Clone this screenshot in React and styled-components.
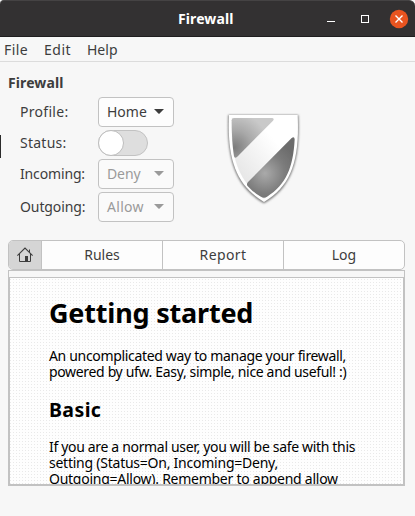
import React from "react";
import styled, { createGlobalStyle } from "styled-components";

const Global = createGlobalStyle`
  * { box-sizing: border-box; }
  body { margin: 0; background: #f7f7f7; overflow: hidden; }
  h1, h2, p { margin: 0; }
`;

const Window = styled.div`
  width: 415px;
  height: 516px;
  background: #f7f7f7;
  color: #3d3d3d;
  font-family: "Noto Sans", "Open Sans", sans-serif;
  font-size: 14px;
  overflow: hidden;
`;

const Text = styled.span`
  display: block;
  white-space: nowrap;
  letter-spacing: ${(p) => p.$track || 0}px;
`;

const TitleBar = styled.header`
  display: grid;
  grid-template-columns: 178px 1fr auto;
  align-items: center;
  height: 37px;
  padding-right: 6px;
  background: #333132;
  border-top: 1px solid #454344;
  border-bottom: 1px solid #1f1e1f;
  border-radius: 4px 6px 0 0;
  color: #fff;
  font-weight: 700;
`;

const WindowButtons = styled.svg`
  grid-column: 3;
  display: block;
`;

const MenuBar = styled.nav`
  display: grid;
  grid-template-columns: 40px 43px auto;
  align-items: center;
  height: 25px;
  padding-left: 4px;
  border-bottom: 1px solid #dcdcdc;
`;

const Summary = styled.section`
  display: grid;
  grid-template-columns: 215px auto;
  height: 178px;
`;

const Heading = styled.div`
  padding: 11px 0 0 8px;
  height: 35px;
  line-height: 20px;
  font-weight: 700;
`;

const Row = styled.div`
  display: grid;
  grid-template-columns: 78px auto;
  justify-content: start;
  align-items: center;
  padding-left: 20px;
  height: ${(p) => p.$h}px;
  margin-bottom: 3px;
`;

const RowLabel = styled(Text)`
  padding-bottom: 2px;
`;

const Combo = styled.div`
  display: flex;
  align-items: center;
  justify-content: space-between;
  width: 76px;
  height: 30px;
  padding: 0 9px 1px 8px;
  border: 1px solid #c2c2c2;
  border-radius: 4px;
  background: ${(p) => (p.$off ? "#fafafa" : "#fdfdfd")};
  color: ${(p) => (p.$off ? "#9a9a9a" : "#3d3d3d")};
`;

const Switch = styled.div`
  width: 50px;
  height: 26px;
  border: 1px solid #c2c2c2;
  border-radius: 13px;
  background: #dedede;
`;

const Knob = styled.div`
  width: 26px;
  height: 26px;
  margin: -1px;
  border: 1px solid #bdbdbd;
  border-radius: 50%;
  background: #fff;
`;

const ShieldArt = styled.svg`
  display: block;
  margin-top: 43px;
`;

const EdgeMark = styled.div`
  position: absolute;
  left: 0;
  top: 135px;
  width: 1px;
  height: 23px;
  background: #2b2b2b;
`;

const TabStrip = styled.div`
  display: grid;
  grid-template-columns: 33px 121px 121px 1fr;
  width: 397px;
  height: 30px;
  margin-left: 8px;
  border: 1px solid #c2c2c2;
  border-radius: 5px;
  background: #fdfdfd;
  overflow: hidden;
`;

const Tab = styled.div`
  display: flex;
  align-items: center;
  justify-content: center;
  padding-bottom: 1px;
  background: ${(p) => (p.$active ? "#d5d5d5" : "transparent")};
  border-right: ${(p) => (p.$last ? 0 : 1)}px solid #c2c2c2;
`;

const Panel = styled.section`
  width: 397px;
  height: 216px;
  margin-left: 8px;
  padding-top: 6px;
  border: 1px solid #c2c2c2;
`;

const Page = styled.article`
  height: 208px;
  padding-left: 39px;
  border: 1px solid #c2c2c2;
  overflow: hidden;
  color: #000;
  background: #fefefe conic-gradient(at 1px 1px, transparent 75%, #e9e9e9 0) 0 1px / 3px 3px;
`;

const Title = styled.h1`
  padding-top: 15px;
  font-size: 27px;
  line-height: 40px;
`;

const Subtitle = styled.h2`
  padding: 17px 0 16px;
  font-size: 19.5px;
  line-height: 26px;
`;

const Paragraph = styled.p`
  padding-top: ${(p) => p.$top || 0}px;
  line-height: 16px;
`;

const Arrow = ({ color }) => (
  <svg width="10" height="5" viewBox="0 0 10 5">
    <path d="M0 0H10L5.6 4.6Q5 5 4.4 4.6Z" fill={color} />
  </svg>
);

const Select = ({ label, track, off }) => (
  <Combo $off={off}>
    <Text $track={track}>{label}</Text>
    <Arrow color={off ? "#9a9a9a" : "#3d3d3d"} />
  </Combo>
);

const HomeIcon = () => (
  <svg width="16" height="16" viewBox="0 0 16 16" fill="none" stroke="#3d3d3d">
    <path d="M0.4 8.6L8 1.1L15.6 8.6" strokeWidth="1.1" />
    <path d="M12.5 5V2.5" />
    <path d="M2.5 7V14.5H13.5V7" />
    <path d="M8 9H11V14H8Z" fill="#3d3d3d" stroke="none" />
  </svg>
);

const Shield = () => (
  <ShieldArt width="95" height="105" viewBox="0 0 285 315">
    <defs>
      <linearGradient id="body" x1="0" y1="1" x2="1" y2="0">
        <stop offset="0.2" stopColor="#e6e6e6" />
        <stop offset="0.7" stopColor="#ffffff" />
      </linearGradient>
      <radialGradient id="upper" gradientUnits="userSpaceOnUse" cx="58" cy="128" r="105">
        <stop offset="0" stopColor="#7b7b7b" />
        <stop offset="0.5" stopColor="#a8a8a8" />
        <stop offset="1" stopColor="#c9c9c9" />
      </radialGradient>
      <radialGradient id="lower" gradientUnits="userSpaceOnUse" cx="150" cy="205" r="100">
        <stop offset="0" stopColor="#aaaaaa" />
        <stop offset="0.6" stopColor="#7c7c7c" />
        <stop offset="1" stopColor="#6c6c6c" />
      </radialGradient>
      <filter id="shadow" x="-10%" y="-10%" width="120%" height="120%">
        <feGaussianBlur stdDeviation="3" />
      </filter>
      <filter id="soft" x="-10%" y="-10%" width="120%" height="120%">
        <feGaussianBlur stdDeviation="1.6" />
      </filter>
    </defs>
    <path d="M40 30H250C256 165 232 246 147 295C62 246 34 165 40 30Z" fill="#777" filter="url(#shadow)" />
    <path d="M42 30H248C254 164 230 242 147 291C64 242 36 164 42 30Z" fill="#fff" />
    <path d="M50 38H240C245 158 223 234 147 281C71 234 45 158 50 38Z" fill="url(#body)" />
    <g filter="url(#soft)">
      <path d="M57 39H172Q179 41 174 47L66 156Q59 161 57 154Q50 110 50 46Q50 39 57 39Z" fill="url(#upper)" />
      <path d="M230 99Q238 93 239 103C235 185 214 240 156 275Q147 281 138 275Q112 260 97 242Q94 237 99 231Z" fill="url(#lower)" />
    </g>
  </ShieldArt>
);

export default function App() {
  return (
    <>
      <Global />
      <Window>
        <TitleBar>
          <span />
          <Text $track={0.1}>Firewall</Text>
          <WindowButtons width="84" height="34" viewBox="0 0 84 34" fill="none">
            <path d="M2 19.5H10" stroke="#fff" />
            <rect x="36.5" y="13.5" width="7" height="7" stroke="#fff" />
            <circle cx="74" cy="17" r="9.2" fill="#e95420" />
            <path d="M70.5 13.5L77.5 20.5M77.5 13.5L70.5 20.5" stroke="#fff" strokeWidth="1.4" />
          </WindowButtons>
        </TitleBar>
        <MenuBar>
          <Text $track={0.4}>File</Text>
          <Text $track={0.5}>Edit</Text>
          <Text>Help</Text>
        </MenuBar>
        <Summary>
          <div>
            <Heading><Text $track={0.1}>Firewall</Text></Heading>
            <Row $h={30}><RowLabel $track={0.3}>Profile:</RowLabel><Select label="Home" /></Row>
            <Row $h={26}><RowLabel $track={0.25}>Status:</RowLabel><Switch><Knob /></Switch></Row>
            <Row $h={30}><RowLabel $track={-0.15}>Incoming:</RowLabel><Select label="Deny" track={-0.1} off /></Row>
            <Row $h={30}><RowLabel $track={-0.1}>Outgoing:</RowLabel><Select label="Allow" track={0.3} off /></Row>
          </div>
          <Shield />
        </Summary>
        <TabStrip>
          <Tab $active><HomeIcon /></Tab>
          <Tab><Text>Rules</Text></Tab>
          <Tab><Text $track={0.4}>Report</Text></Tab>
          <Tab $last><Text>Log</Text></Tab>
        </TabStrip>
        <Panel>
          <Page>
            <Title><Text $track={-0.2}>Getting started</Text></Title>
            <Paragraph $top={15}>
              <Text $track={-0.33}>An uncomplicated way to manage your firewall,</Text>
              <Text $track={-0.34}>powered by ufw. Easy, simple, nice and useful! :)</Text>
            </Paragraph>
            <Subtitle><Text $track={0.4}>Basic</Text></Subtitle>
            <Paragraph>
              <Text $track={-0.33}>If you are a normal user, you will be safe with this</Text>
              <Text $track={-0.24}>setting (Status=On, Incoming=Deny,</Text>
              <Text $track={-0.26}>Outgoing=Allow). Remember to append allow</Text>
            </Paragraph>
          </Page>
        </Panel>
        <EdgeMark />
      </Window>
    </>
  );
}
